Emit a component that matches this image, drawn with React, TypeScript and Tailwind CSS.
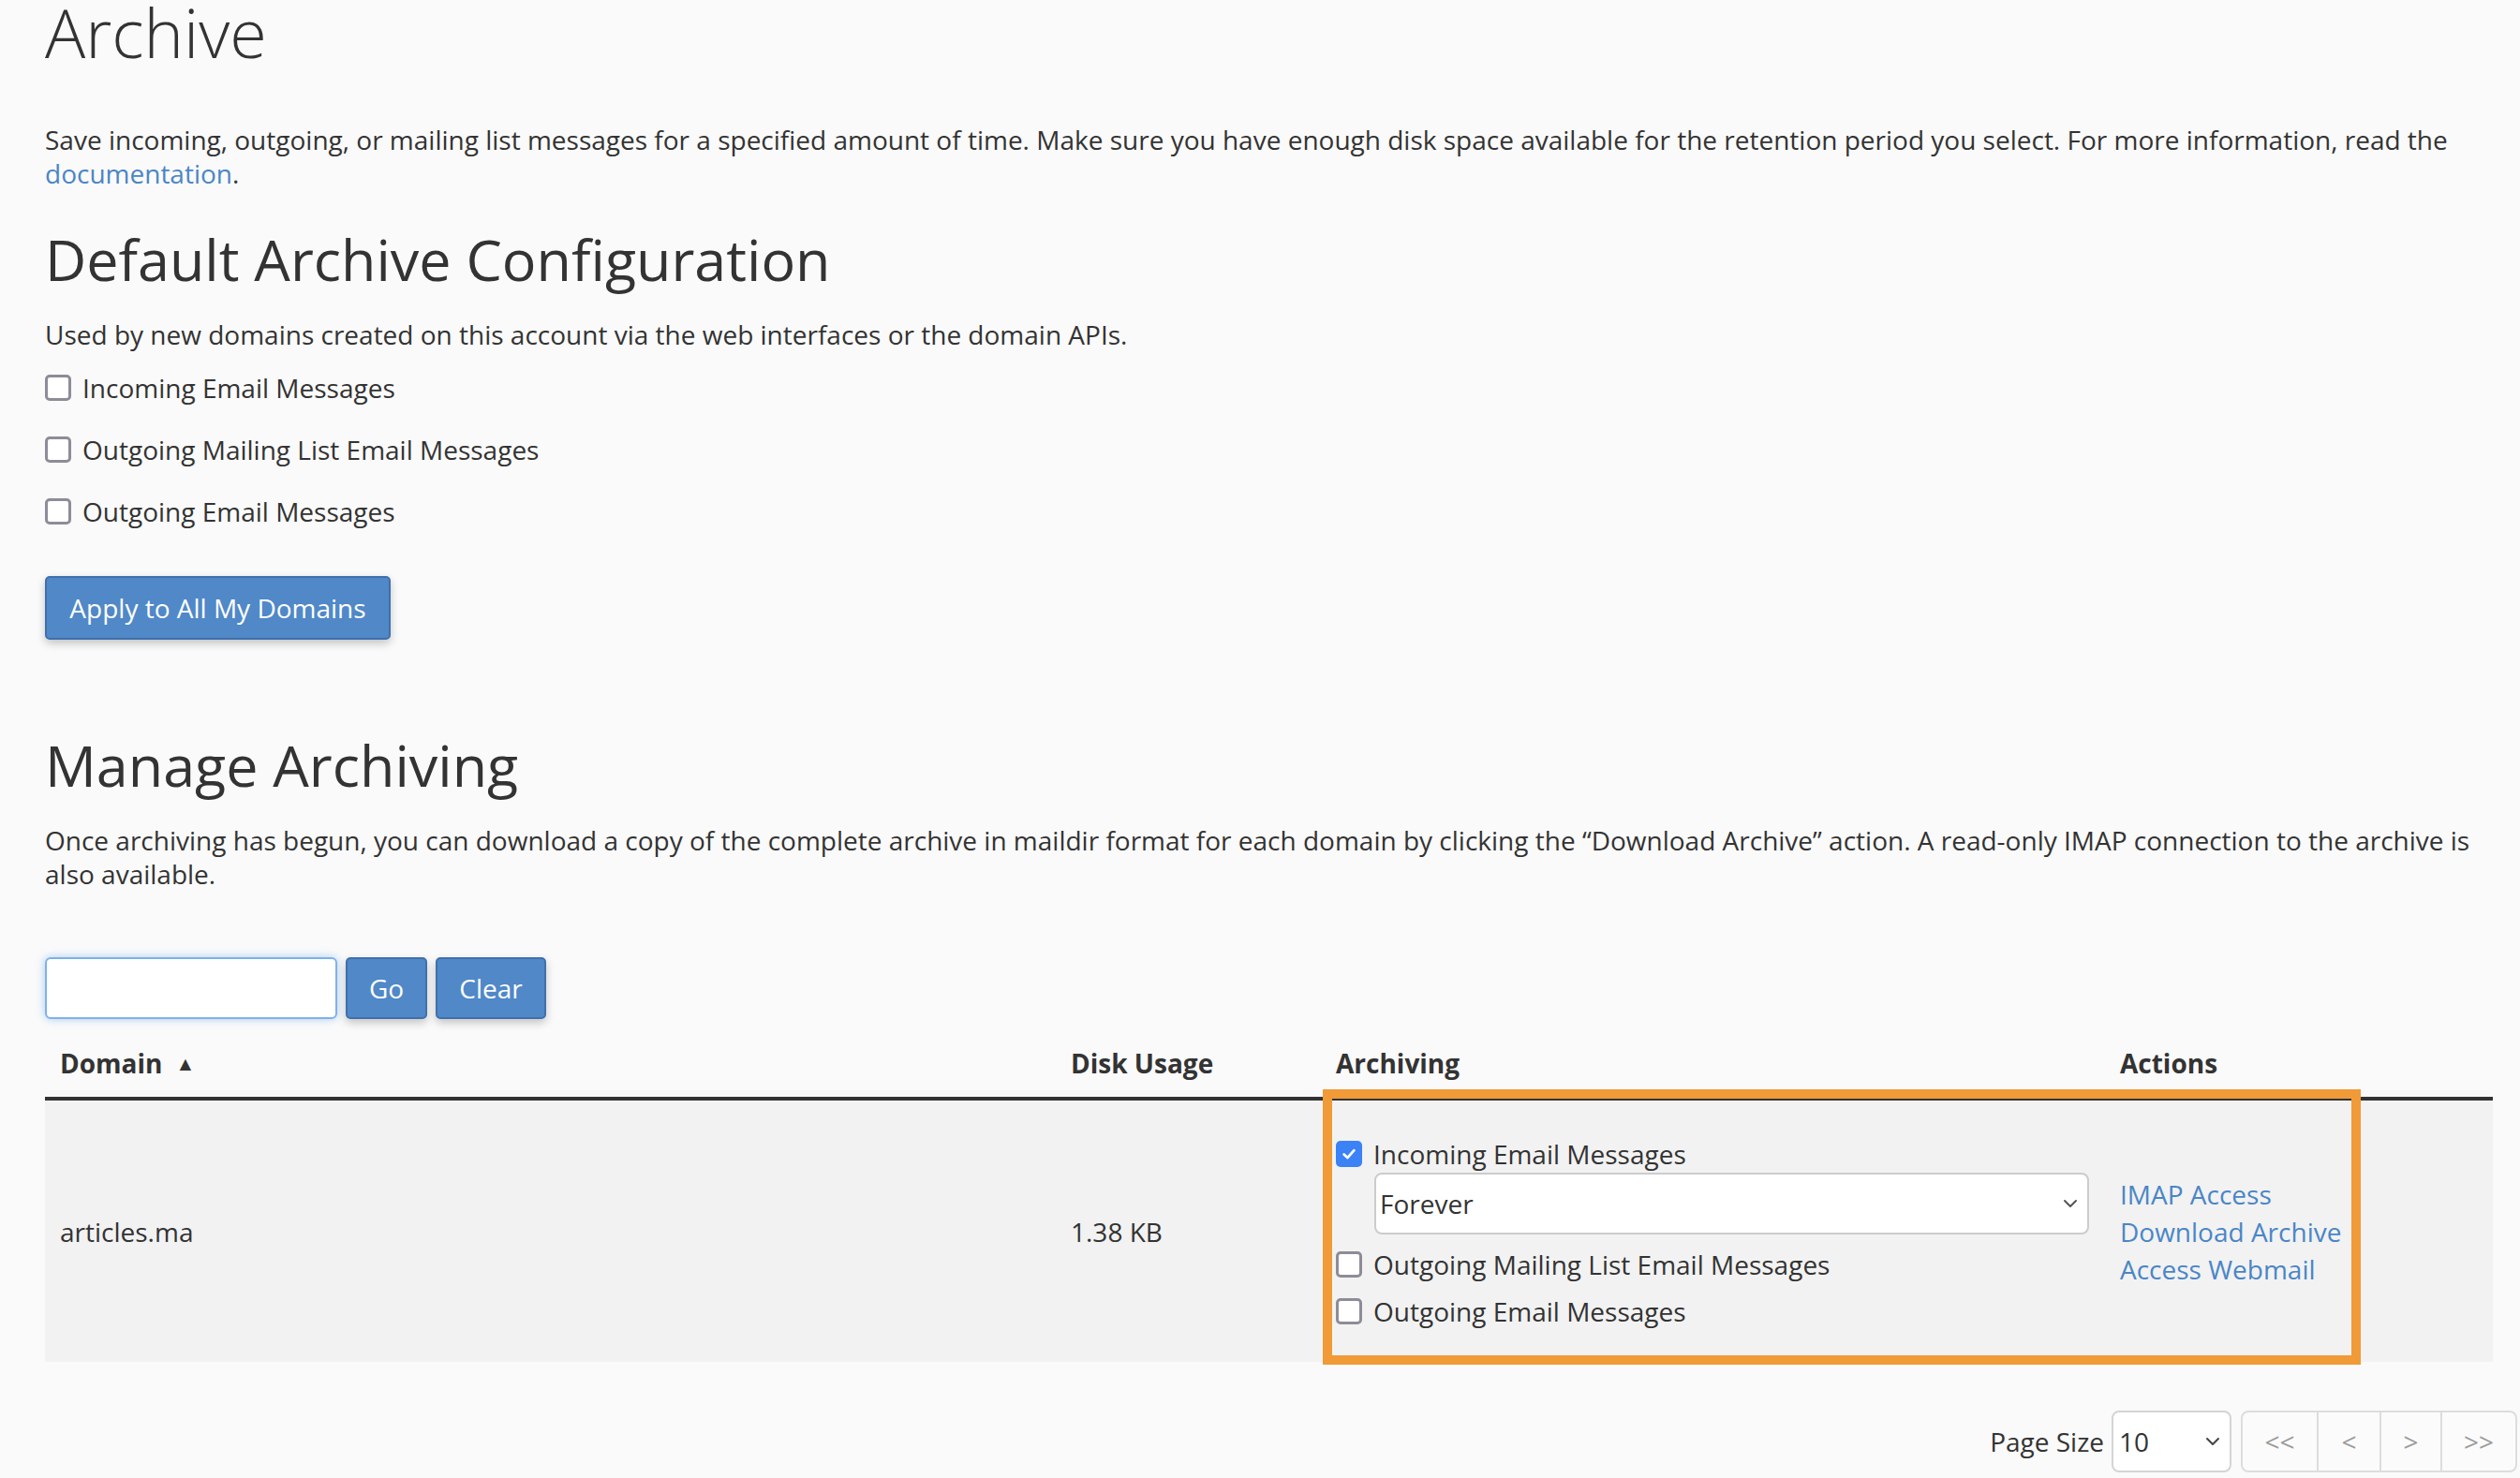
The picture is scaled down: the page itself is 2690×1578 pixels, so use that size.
import React from "react";

function Box({ checked = false }: { checked?: boolean }) {
  if (checked) {
    return (
      <span className="flex h-[28px] w-[28px] shrink-0 items-center justify-center rounded-[5px] bg-[#3b82f6]">
        <svg width="18" height="18" viewBox="0 0 16 16" fill="none">
          <path d="M3.2 8.4 L6.6 11.6 L12.8 4.6" stroke="#ffffff" strokeWidth="2.4" strokeLinecap="round" strokeLinejoin="round" />
        </svg>
      </span>
    );
  }
  return <span className="block h-[28px] w-[28px] shrink-0 rounded-[5px] border-[3px] border-[#8d8c98] bg-white" />;
}

function Chevron({ color = "#555" }: { color?: string }) {
  return (
    <svg width="16" height="10" viewBox="0 0 16 10" fill="none">
      <path d="M2 2 L8 8 L14 2" stroke={color} strokeWidth="2" strokeLinecap="round" strokeLinejoin="round" />
    </svg>
  );
}

function CheckRow({ label, checked = false, className = "" }: { label: string; checked?: boolean; className?: string }) {
  return (
    <div className={"flex h-[36px] items-center gap-[12px] " + className}>
      <Box checked={checked} />
      <span>{label}</span>
    </div>
  );
}

export default function App() {
  return (
    <div
      className="min-h-[1578px] w-[2690px] overflow-hidden bg-[#fafafa] text-[28px] leading-[36px] text-[#333333]"
      style={{ fontFamily: '"Open Sans", "Noto Sans", sans-serif' }}
    >
      <div className="pl-[48px]">
        <h1 className="text-[72px] font-light leading-[68px] text-[#333]">Archive</h1>

        <p className="mt-[63px] pr-[40px]">
          Save incoming, outgoing, or mailing list messages for a specified amount of time. Make sure you have enough disk space available for the retention period you select. For more information, read the{" "}
          <a className="text-[#4a86c6]" href="#">documentation</a>.
        </p>

        <h2 className="mt-[41px] text-[61px] font-medium leading-[66px] text-[#333]">Default Archive Configuration</h2>

        <p className="mt-[29px]">Used by new domains created on this account via the web interfaces or the domain APIs.</p>

        <div className="mt-[21px] flex flex-col gap-[30px]">
          <CheckRow label="Incoming Email Messages" />
          <CheckRow label="Outgoing Mailing List Email Messages" />
          <CheckRow label="Outgoing Email Messages" />
        </div>

        <button className="mt-[51px] flex h-[68px] w-[369px] items-center justify-center rounded-[5px] border-2 border-[#3f70ad] bg-[#5088c8] text-[28px] text-white shadow-[0_4px_10px_rgba(0,0,0,0.22)]">
          Apply to All My Domains
        </button>

        <h2 className="mt-[101px] text-[61px] font-medium leading-[66px] text-[#333]">Manage Archiving</h2>

        <p className="mt-[29px] pr-[40px]">
          Once archiving has begun, you can download a copy of the complete archive in maildir format for each domain by clicking the “Download Archive” action. A read-only IMAP connection to the archive is also available.
        </p>

        <div className="mt-[71px] flex h-[66px] items-stretch gap-[9px]">
          <div className="w-[312px] rounded-[6px] border-2 border-[#7fb1e9] bg-white shadow-[0_0_10px_rgba(102,170,235,0.55)]" />
          <button className="w-[87px] rounded-[5px] border-2 border-[#3f70ad] bg-[#5088c8] text-white shadow-[0_4px_10px_rgba(0,0,0,0.22)]">Go</button>
          <button className="w-[118px] rounded-[5px] border-2 border-[#3f70ad] bg-[#5088c8] text-white shadow-[0_4px_10px_rgba(0,0,0,0.22)]">Clear</button>
        </div>

        <div className="relative mt-[10px] w-[2613px]">
          <div className="grid grid-cols-[1079px_283px_834px_417px] border-b-4 border-[#333] font-bold">
            <div className="flex items-center gap-[14px] pb-[18px] pl-[16px] pt-[19px]">
              <span>Domain</span>
              <span className="text-[21px]">▲</span>
            </div>
            <div className="pb-[18px] pl-[16px] pt-[19px]">Disk Usage</div>
            <div className="pb-[18px] pl-[16px] pt-[19px]">Archiving</div>
            <div className="pb-[18px] pl-[19px] pt-[19px]">Actions</div>
          </div>

          <div className="grid h-[279px] grid-cols-[1079px_283px_834px_417px] bg-[#f2f2f2]">
            <div className="flex items-center pl-[16px]">articles.ma</div>
            <div className="flex items-center pl-[16px]">1.38 KB</div>
            <div className="pl-[16px] pr-[14px] pt-[39px]">
              <CheckRow label="Incoming Email Messages" checked />
              <div className="ml-[41px] mt-[2px] flex h-[66px] items-center justify-between rounded-[8px] border-2 border-[#cccccc] bg-white pl-[4px] pr-[10px]">
                <span>Forever</span>
                <Chevron />
              </div>
              <CheckRow className="mt-[14px]" label="Outgoing Mailing List Email Messages" />
              <CheckRow className="mt-[14px]" label="Outgoing Email Messages" />
            </div>
            <div className="flex flex-col justify-center pl-[19px] leading-[40px] text-[#4a86c6]">
              <a href="#">IMAP Access</a>
              <a href="#">Download Archive</a>
              <a href="#">Access Webmail</a>
            </div>
          </div>

          <div className="pointer-events-none absolute left-[1364px] top-[65px] h-[294px] w-[1108px] border-[10px] border-[#f09a38]" />
        </div>

        <div className="mt-[52px] flex items-center justify-end pr-[3px]">
          <span className="mr-[8px]">Page Size</span>
          <div className="flex h-[66px] w-[128px] items-center justify-between rounded-[8px] border-2 border-[#d4d4d4] bg-white pl-[6px] pr-[10px]">
            <span>10</span>
            <Chevron color="#444" />
          </div>
          <div className="ml-[10px] flex h-[66px] overflow-hidden rounded-[8px] border-2 border-[#dddddd] bg-[#fbfbfb] text-[#9a9a9a]">
            <div className="flex w-[81px] items-center justify-center border-r-2 border-[#dddddd]">&lt;&lt;</div>
            <div className="flex w-[67px] items-center justify-center border-r-2 border-[#dddddd]">&lt;</div>
            <div className="flex w-[65px] items-center justify-center border-r-2 border-[#dddddd]">&gt;</div>
            <div className="flex w-[78px] items-center justify-center">&gt;&gt;</div>
          </div>
        </div>
      </div>
    </div>
  );
}
